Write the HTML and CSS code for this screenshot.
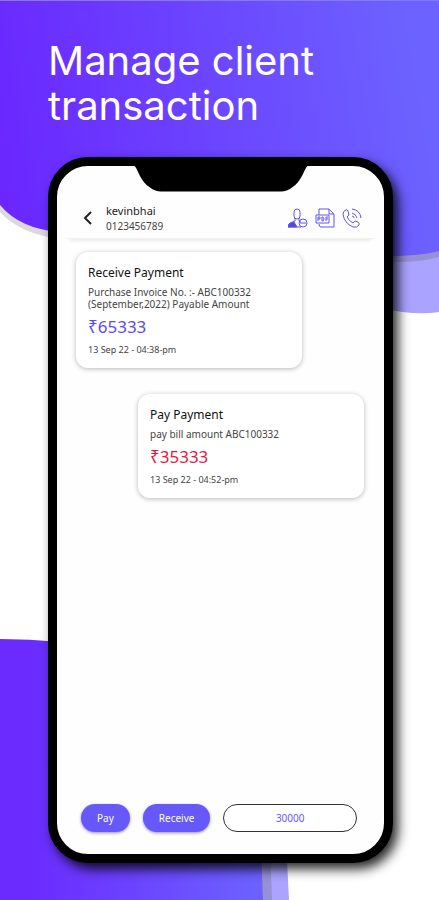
FILE: index.html
```html
<!DOCTYPE html>
<html lang="en">
<head>
<meta charset="utf-8">
<meta name="viewport" content="width=device-width, initial-scale=1">
<title>Manage client transaction</title>
<link rel="stylesheet" href="styles.css">
</head>
<body>
<svg class="backdrop" viewBox="0 0 439 900" preserveAspectRatio="none" aria-hidden="true">
  <defs>
    <linearGradient id="top" gradientUnits="userSpaceOnUse" x1="0" y1="160" x2="420" y2="90">
      <stop offset="0" stop-color="#6a27ff"/><stop offset="1" stop-color="#6c62ff"/>
    </linearGradient>
    <linearGradient id="low" gradientUnits="userSpaceOnUse" x1="30" y1="0" x2="262" y2="0">
      <stop offset="0" stop-color="#6b2bff"/><stop offset="1" stop-color="#6c62ff"/>
    </linearGradient>
  </defs>
  <path d="M380 230H439V312Q415 316 380 308Z" fill="#aaa3ff"/>
  <path d="M0 190V212Q20 234 60 239V190Z" fill="#dcdadd"/>
  <path d="M380 200H439V257Q415 264 380 261Z" fill="#9690d5"/>
  <path d="M0 0H439V251Q415 257 380 256L60 232Q20 229 0 205Z" fill="url(#top)"/>
  <path d="M0 0H439V1H0Z" fill="#8578fa"/>
  <path d="M240 820H285Q287 860 289 900H240Z" fill="#aaa3ff"/>
  <path d="M240 820H270Q270 860 272 900H240Z" fill="#9690d5"/>
  <path d="M0 639Q30 639 60 642L261 820Q261 860 263 900H0Z" fill="url(#low)"/>
</svg>
<main class="page">
  <h1 class="headline">Manage client transaction</h1>
  <section class="phone">
    <svg class="notch" viewBox="0 0 174 26" aria-hidden="true"><path d="M0 0H174C170 3 168 16 158 22Q153 26 147 26H27Q21 26 16 22C6 16 4 3 0 0Z"/></svg>
    <header class="bar">
      <button class="icon-button back" type="button" aria-label="Back">
        <svg width="10" height="16" viewBox="0 0 10 16"><path d="M8 2 2 8l6 6" fill="none" stroke="#222" stroke-width="2"/></svg>
      </button>
      <div class="contact">
        <p class="name">kevinbhai</p>
        <p class="number">0123456789</p>
      </div>
      <button class="icon-button" type="button" aria-label="Remove client">
        <svg class="icon" viewBox="0 0 20 20"><rect x="6" y="1" width="6" height="10" rx="3"/><path d="M7 10v3L2 15Q0 16 0 19H13M11 10v3l2 1"/><path class="solid" d="M0 19Q0 15 6 14L9 19Z"/><circle cx="15" cy="15" r="4"/><path d="M12 15h6"/></svg>
      </button>
      <button class="icon-button" type="button" aria-label="Open PDF">
        <svg class="icon" viewBox="0 0 20 20"><path d="M4 7V1h10l5 5v13H6q-2 0-2-3M14 1v5h5"/><path d="M1 7h13v8H1Z"/><path d="M3 13V9h2v2H3M7 9v4h1q2-2 0-4ZM11 13V9h2M11 11h2"/></svg>
      </button>
      <button class="icon-button" type="button" aria-label="Call client">
        <svg class="icon" viewBox="0 0 20 20"><path d="M4 2Q1 3 1 6Q2 15 11 19Q15 20 17 17Q18 16 16 14L13 13L11 15Q7 13 5 9L7 7L6 3Q5 1 4 2Z"/><path d="M10 5q4 1 5 5M10 1q8 1 9 9M10 8q2 0 2 2"/></svg>
      </button>
    </header>
    <div class="messages">
      <article class="card received">
        <h2 class="title">Receive Payment</h2>
        <p class="note">Purchase Invoice No. :- ABC100332 (September,2022) Payable Amount</p>
        <p class="amount">₹65333</p>
        <p class="time">13 Sep 22 - 04:38-pm</p>
      </article>
      <article class="card paid">
        <h2 class="title">Pay Payment</h2>
        <p class="note">pay bill amount ABC100332</p>
        <p class="amount">₹35333</p>
        <p class="time">13 Sep 22 - 04:52-pm</p>
      </article>
    </div>
    <form class="actions">
      <button class="pill" type="button">Pay</button>
      <button class="pill" type="button">Receive</button>
      <input class="value" type="text" value="30000" aria-label="Amount">
    </form>
  </section>
</main>
</body>
</html>
```
FILE: styles.css
```css
* { box-sizing: border-box; }
body { margin: 0; background: #fff; font-family: "Noto Sans", "Open Sans", sans-serif; color: #222; }
h1, h2, p { margin: 0; font-weight: 400; }
button, input { font: inherit; }
.backdrop { position: absolute; inset: 0; width: 100%; height: 100%; z-index: -1; }
.page { min-height: 100vh; display: flex; flex-direction: column; padding: 38px 46px 37px 48px; }
.headline { width: 290px; color: #fff; font-family: Inter, sans-serif; font-size: 40px; line-height: 45px; margin-bottom: 29px; }
.phone {
  flex: 1; display: flex; flex-direction: column; position: relative;
  border: 9px solid #000; border-radius: 40px; background: #fefefe; padding: 32px 10px 22px;
  box-shadow: 5px 6px 12px rgba(0, 0, 0, .85);
}
.notch { position: absolute; top: -1px; left: 50%; width: 174px; height: 27px; transform: translateX(-50%); }
.bar { display: flex; align-items: center; gap: 7px; height: 41px; padding: 0 12px 0 16px; border-bottom: 1px solid #f1f1f1; box-shadow: 0 5px 3px -3px rgba(0, 0, 0, .08); }
.icon-button { display: flex; padding: 0; border: 0; background: none; }
.back { margin-right: 6px; }
.contact { flex: 1; }
.name { font-size: 11px; line-height: 16px; }
.number { font-size: 10px; line-height: 14px; color: #444; }
.icon { width: 20px; height: 20px; fill: none; stroke: #6255e8; stroke-width: 1; }
.solid { fill: #5244e6; }
.messages { flex: 1; display: flex; flex-direction: column; gap: 26px; padding: 13px 10px 12px 9px; }
.card { width: 226px; padding: 12px; border-radius: 12px; background: #fff; box-shadow: 0 1px 5px rgba(0, 0, 0, .28); }
.paid { align-self: flex-end; }
.title { font-size: 12px; line-height: 18px; color: #111; margin-bottom: 4px; }
.note { font-size: 10px; line-height: 12px; color: #444; }
.amount { font-size: 17px; line-height: 24px; margin: 5px 0; color: #5a4df0; }
.paid .amount { color: #e5173f; }
.time { font-size: 9px; line-height: 12px; color: #444; }
.actions { display: flex; gap: 13px; padding: 0 17px 0 14px; }
.pill { height: 28px; padding: 0 16px; border: 0; border-radius: 14px; background: #6658fa; color: #fff; font-size: 10px; box-shadow: 0 1px 3px rgba(70, 60, 200, .6); }
.value { flex: 1; min-width: 0; height: 28px; border: 1px solid #333; border-radius: 14px; background: #fff; color: #6658fa; font-size: 10px; text-align: center; }
```
